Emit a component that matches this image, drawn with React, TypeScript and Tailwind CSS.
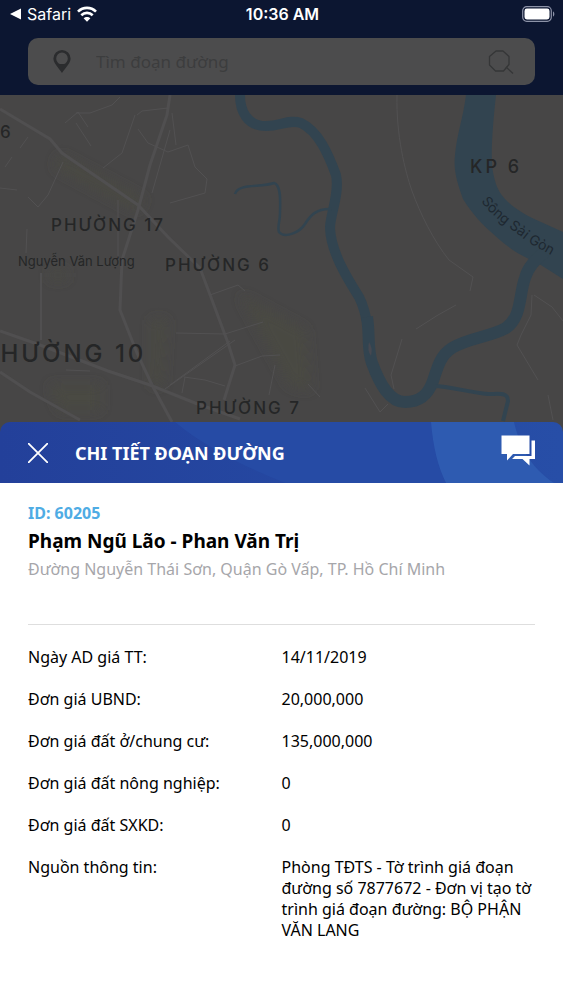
import { useState } from "react";

interface DetailRow {
  label: string;
  value: string;
}

const rows: DetailRow[] = [
  { label: "Ngày AD giá TT:", value: "14/11/2019" },
  { label: "Đơn giá UBND:", value: "20,000,000" },
  { label: "Đơn giá đất ở/chung cư:", value: "135,000,000" },
  { label: "Đơn giá đất nông nghiệp:", value: "0" },
  { label: "Đơn giá đất SXKD:", value: "0" },
  {
    label: "Nguồn thông tin:",
    value:
      "Phòng TĐTS - Tờ trình giá đoạn đường số 7877672 - Đơn vị tạo tờ trình giá đoạn đường: BỘ PHẬN VĂN LANG",
  },
];

function StatusBar() {
  return (
    <div className="grid grid-cols-3 items-center h-7 pl-[10px] pr-2 text-white font-['Inter',sans-serif]">
      <div className="flex items-center">
        <svg viewBox="0 0 11 12" className="w-[11px] h-3 mr-[6px]" fill="currentColor">
          <path d="M0 6 11 0.5V11.5z" />
        </svg>
        <span className="text-base">Safari</span>
        <svg viewBox="0 0 20 16" className="w-5 h-4 ml-[6px]" fill="none" stroke="currentColor" strokeWidth="2.6">
          <path d="M1 5.6C6 .6 14 .6 19 5.6" />
          <path d="M4.3 9.2c3.2-3.1 8.2-3.1 11.4 0" />
          <path d="M10 15.8 6.6 12.3c1.9-1.8 4.9-1.8 6.8 0z" fill="currentColor" stroke="none" />
        </svg>
      </div>
      <div className="text-center text-base font-semibold">10:36 AM</div>
      <svg viewBox="0 0 33 16" className="w-[33px] h-4 justify-self-end">
        <rect x="0.7" y="0.7" width="28.6" height="14.6" rx="4" fill="none" stroke="#8d93a8" strokeWidth="1.2" />
        <rect x="2.5" y="2.5" width="25" height="11" rx="2.4" fill="#fff" />
        <path d="M31 5.5c1.8.6 1.8 4.4 0 5z" fill="#8d93a8" />
      </svg>
    </div>
  );
}

function SearchBox() {
  return (
    <label className="flex items-center h-[47px] mx-7 mt-[10px] pl-[25px] pr-[21px] rounded-[10px] bg-[#4c4c4d]">
      <svg viewBox="0 0 18 23" className="w-[18px] h-[23px] shrink-0" fill="#2b2c2e">
        <path
          fillRule="evenodd"
          d="M9 0a8.6 8.6 0 0 1 8.6 8.6C17.6 13 12.5 18 9 23 5.5 18 .4 13 .4 8.6A8.6 8.6 0 0 1 9 0zm0 2.6a5.8 5.8 0 0 0-5.8 5.8c0 2.4 1.5 4.7 3.6 5.6h4.4c2.1-.9 3.6-3.2 3.6-5.6A5.8 5.8 0 0 0 9 2.6z"
        />
      </svg>
      <input
        type="text"
        aria-label="Tìm đoạn đường"
        placeholder="Tìm đoạn đường"
        className="flex-1 min-w-0 ml-[25px] bg-transparent text-[17px] outline-none placeholder:text-[#3c3d3e]"
      />
      <svg viewBox="0 0 26 24" className="w-[26px] h-6 shrink-0" fill="none" stroke="#353637" strokeWidth="1.3">
        <path d="M8 1h7l6 5.5v8L15.5 21H7.5L1.5 15V6.5z" strokeLinejoin="round" />
        <path d="m18 17 7 6.5" />
      </svg>
    </label>
  );
}

function StreetMap() {
  return (
    <svg
      viewBox="0 0 563 340"
      preserveAspectRatio="xMidYMid slice"
      className="block w-full bg-[#474646] font-['Inter',sans-serif]"
    >
      <defs>
        <filter id="haze" x="-50%" y="-50%" width="200%" height="200%">
          <feGaussianBlur stdDeviation="6" />
        </filter>
        <path id="riverName" d="M481 106C493 123 509 132 524 144C535 153 546 156 562 167" />
      </defs>

      {/* built-up areas */}
      <g fill="#4a4843" filter="url(#haze)">
        <path d="M60 60 145 105 135 115 55 72z" />
        <path d="M152 225h14l-4 65h-10z" />
        <path d="M240 200 305 235 310 295 290 290 265 245z" />
        <path d="M50 176h16v8H50zM50 290h50v25H60z" />
      </g>

      {/* main roads */}
      <g fill="none" stroke="#504f50">
        <path d="M0 14 50 44 62 58 138 110 168 142 200 173 212 205 228 248 235 270 224 305" strokeWidth="3" />
        <path d="M170 0 167 20 150 70 138 115 122 165 120 215 137 258 152 290 172 327" strokeWidth="3" />
        <path d="M0 236 40 250 108 276 150 290 195 308 240 324" strokeWidth="3" />
        <path d="M0 277 30 297 80 325" strokeWidth="3" />
        <path d="M41 178V245" strokeWidth="2" />
      </g>

      {/* side streets */}
      <g fill="none" stroke="#525152" strokeWidth="1">
        <path d="M120 2 112 10 90 18 76 18M88 32 78 17 65 28M76 28 91 51" />
        <path d="M168 13 142 16 137 20M138 34 148 48 168 57 188 50 195 72 207 84 205 98 170 108" />
        <path d="M135 20 122 58 103 73M172 18 176 50M170 35 152 98M63 67 48 100 38 112 28 102" />
        <path d="M0 93 17 95M28 42 20 53M5 72 12 62M118 105V165M27 134 26 158M176 238 225 239 263 227" />
        <path d="M210 200 238 190 245 196M165 294 225 252 235 245M170 290 230 246" />
        <path d="M184 282 205 285 225 291M185 282 182 298M235 271 262 261 280 260M275 270 269 300M66 275 90 276" />
        <path d="M397 0C396 40 405 76 412 96C420 118 433 145 449 165L473 182 470 196M456 210 438 220 416 234M402 244 391 280 394 294" />
        <path d="M365 293 380 317 388 309M308 289 320 302M532 200 531 220 521 240 517 250 538 285M534 200 552 212 563 226M548 300 553 325" />
      </g>

      {/* waterways */}
      <path
        d="M466 0C463 24 457 38 455 60C453 76 458 90 463 104C473 120 482 129 491 137C507 152 519 160 536 167L563 184V137L541 127C527 121 517 115 508 107C498 98 495 88 493 77C490 62 493 28 496 0z"
        fill="#324450"
      />
      <g fill="none" stroke="#324450" strokeLinejoin="round">
        <path d="M240 0C240 16 247 31 266 31C281 31 289 24 301 28C318 36 328 58 336 80C340 98 330 120 330 133C331 158 348 184 359 202C365 213 367 226 369 238" strokeWidth="10" />
        <path d="M367 222C370 240 367 254 372 268C380 290 390 307 405 307C420 307 428 300 433 286C438 270 441 260 452 253C468 243 490 242 506 233C522 222 519 199 525 183C528 172 535 165 545 157" strokeWidth="12" />
        <path d="M235 99C238 88 260 93 274 88C282 90 280 110 280 118C280 128 277 131 279 137C285 144 300 137 305 129C310 121 316 113 332 114" strokeWidth="2.5" />
        <path d="M434 291C450 291 470 298 488 299C500 299 508 297 508 306L503 326" strokeWidth="4" />
      </g>
      <path d="M369 247q4 6 2 14q-4-5-2-14z" fill="#464850" />

      {/* labels */}
      <g fill="#252627" fontWeight="500">
        <text x="0" y="43" fontSize="17">6</text>
        <text x="51" y="136" fontSize="17" letterSpacing="2">PHƯỜNG 17</text>
        <text x="165" y="176" fontSize="17" letterSpacing="2">PHƯỜNG 6</text>
        <text x="-18" y="267" fontSize="24" letterSpacing="3">PHƯỜNG 10</text>
        <text x="196" y="319" fontSize="17" letterSpacing="2">PHƯỜNG 7</text>
        <text x="470" y="78" fontSize="18" letterSpacing="3">KP 6</text>
        <text x="18" y="171" fontSize="13" fontWeight="400">Nguyễn Văn Lượng</text>
        <text fontSize="14" fontWeight="400" fill="#1e2830">
          <textPath href="#riverName">Sông Sài Gòn</textPath>
        </text>
      </g>
    </svg>
  );
}

function SheetHeader({ onClose }: { onClose: () => void }) {
  return (
    <div className="relative flex items-center h-[61px] px-7 bg-linear-to-r from-[#23409a] to-[#274ea7] text-white">
      <svg viewBox="0 0 563 61" preserveAspectRatio="none" className="absolute inset-0 w-full h-full">
        <path d="M175 0H431C433 25 438 45 446 61H285C245 45 205 25 175 0z" fill="#264ba5" />
        <path d="M431 0H514C520 25 530 45 554 61H446C438 45 433 25 431 0z" fill="#2e5bb1" />
      </svg>
      <button type="button" aria-label="Đóng" onClick={onClose} className="relative">
        <svg viewBox="0 0 20 20" className="w-5 h-5" fill="none" stroke="currentColor" strokeWidth="1.8">
          <path d="M0 0 20 20M20 0 0 20" />
        </svg>
      </button>
      <h1 className="relative flex-1 ml-[27px] text-lg font-bold">CHI TIẾT ĐOẠN ĐƯỜNG</h1>
      <button type="button" aria-label="Trò chuyện" className="relative">
        <svg viewBox="0 0 34 36" className="w-[34px] h-9" fill="currentColor">
          <path d="M0.5 0.5H28.5V19H12L6 25.5V19H0.5z" />
          <path d="M30.5 5.5H34V24H28.5V30.5L21.5 24H11L14 21H30.5z" />
        </svg>
      </button>
    </div>
  );
}

export default function App() {
  const [open, setOpen] = useState(true);

  return (
    <div className="min-h-screen flex flex-col bg-white font-['Noto_Sans',sans-serif]">
      <header className="pb-[10px] bg-[#0c1631]">
        <StatusBar />
        <SearchBox />
      </header>
      <StreetMap />
      {open && (
        <section className="relative flex-1 -mt-[13px]">
          <div className="rounded-t-[10px] overflow-hidden">
            <SheetHeader onClose={() => setOpen(false)} />
          </div>
          <div className="px-7 pt-[18px] pb-12">
            <p className="text-base leading-6 font-bold text-[#4face4]">ID: 60205</p>
            <h2 className="text-[19px] leading-8 font-bold text-black">Phạm Ngũ Lão - Phan Văn Trị</h2>
            <p className="text-base leading-6 text-[#a6a6aa]">
              Đường Nguyễn Thái Sơn, Quận Gò Vấp, TP. Hồ Chí Minh
            </p>
            <hr className="mt-[43px] mb-3 border-[#dedede]" />
            <table className="w-full table-fixed text-base leading-[21px] text-black">
              <tbody>
                {rows.map((row) => (
                  <tr key={row.label} className="align-top">
                    <th scope="row" className="w-1/2 pt-[10px] pb-[11px] text-left font-normal">
                      {row.label}
                    </th>
                    <td className="pt-[10px] pb-[11px]">{row.value}</td>
                  </tr>
                ))}
              </tbody>
            </table>
          </div>
        </section>
      )}
    </div>
  );
}
